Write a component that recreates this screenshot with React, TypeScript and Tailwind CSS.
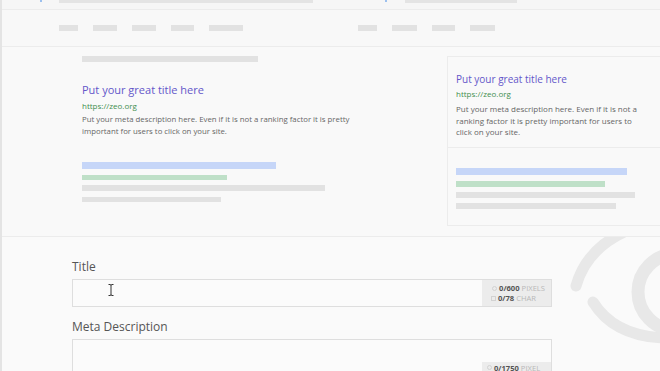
import React from "react";

const font = { fontFamily: '"Open Sans", "Noto Sans", sans-serif' };

function Snippet({ wide }: { wide: boolean }) {
  return (
    <div>
      <div
        className={
          wide
            ? "text-[11px] leading-[16px] text-[#6457c9]"
            : "text-[10px] leading-[14px] text-[#6457c9]"
        }
      >
        Put your great title here
      </div>
      <div className={wide ? "mt-[2px] text-[8px] leading-[12px] text-[#3f8f4f]" : "mt-[2px] text-[8px] leading-[12px] text-[#3f8f4f]"}>
        https://zeo.org
      </div>
      <div
        className={
          wide
            ? "mt-[1px] w-[292px] text-[7.8px] leading-[12px] text-[#666]"
            : "mt-[3px] w-[186px] text-[8px] leading-[11.5px] text-[#666]"
        }
      >
        Put your meta description here. Even if it is not a ranking factor it is pretty important for users to click on your site.
      </div>
    </div>
  );
}

function Counter({ a, b, c, d }: { a: string; b: string; c?: string; d?: string }) {
  return (
    <div className="w-[69px] bg-[#ececec] flex flex-col items-end justify-center pr-[6px] text-[7.6px] leading-[10px]">
      <div className="flex items-center gap-[2px]">
        <span className="inline-block w-[5px] h-[5px] rounded-full border border-[#d2d2d2]" />
        <span className="font-bold text-[#555]">{a}</span>
        <span className="text-[#b8b8b8]">{b}</span>
      </div>
      {c && (
        <div className="flex items-center gap-[2px] mr-[9px]">
          <span className="inline-block w-[5px] h-[5px] border border-[#d2d2d2]" />
          <span className="font-bold text-[#555]">{c}</span>
          <span className="text-[#b8b8b8]">{d}</span>
        </div>
      )}
    </div>
  );
}

export default function App() {
  return (
    <div
      className="relative w-[660px] h-[371px] overflow-hidden bg-[#fafafa] border-l-[2px] border-[#e4e4e4]"
      style={font}
    >
      {/* top strip */}
      <div className="relative h-[10px] border-b border-[#ececec] bg-[#f6f6f6]">
        <div className="absolute left-[38px] top-0 w-[2px] h-[2px] bg-[#9cc0ee]" />
        <div className="absolute left-[57px] top-0 w-[254px] h-[3px] bg-[#e4e4e4]" />
        <div className="absolute left-[383px] top-0 w-[2px] h-[2px] bg-[#9cc0ee]" />
        <div className="absolute left-[403px] top-0 w-[112px] h-[3px] bg-[#e4e4e4]" />
      </div>

      {/* nav */}
      <div className="h-[37px] border-b border-[#ececec] bg-[#f8f8f8] flex items-center pl-[57px] pr-[165px]">
        <div className="flex gap-[15px] items-center">
          <div className="w-[19px] h-[6px] bg-[#e2e2e2]" />
          <div className="w-[24px] h-[6px] bg-[#e2e2e2]" />
          <div className="w-[24px] h-[6px] bg-[#e2e2e2]" />
          <div className="w-[23px] h-[6px] bg-[#e2e2e2]" />
          <div className="w-[34px] h-[6px] bg-[#e2e2e2]" />
        </div>
        <div className="ml-auto flex gap-[15px] items-center">
          <div className="w-[19px] h-[6px] bg-[#e2e2e2]" />
          <div className="w-[25px] h-[6px] bg-[#e2e2e2]" />
          <div className="w-[23px] h-[6px] bg-[#e2e2e2]" />
          <div className="w-[25px] h-[6px] bg-[#e2e2e2]" />
        </div>
      </div>

      {/* previews */}
      <div className="relative z-10 h-[190px] border-b border-[#ececec] bg-[#f9f9f9] flex">
        <div className="w-[445px] pl-[80px] pt-[9px]">
          <div className="w-[176px] h-[6px] bg-[#e2e2e2]" />
          <div className="mt-[20px]">
            <Snippet wide />
          </div>
          <div className="mt-[25px] flex flex-col">
            <div className="w-[194px] h-[7px] bg-[#c6d6f8]" />
            <div className="mt-[6px] w-[145px] h-[5px] bg-[#bfe0c8]" />
            <div className="mt-[5px] w-[243px] h-[6px] bg-[#e2e2e2]" />
            <div className="mt-[6px] w-[139px] h-[5px] bg-[#e2e2e2]" />
          </div>
        </div>
        <div className="flex-1 pt-[9px]">
          <div className="h-[92px] border-l border-t border-b border-[#ececec] pl-[8px] pt-[15px]">
            <Snippet wide={false} />
          </div>
          <div className="h-[78px] border-l border-b border-[#ececec] pl-[8px] pt-[20px] flex flex-col">
            <div className="w-[171px] h-[7px] bg-[#c6d6f8]" />
            <div className="mt-[6px] w-[149px] h-[6px] bg-[#bfe0c8]" />
            <div className="mt-[5px] w-[179px] h-[6px] bg-[#e2e2e2]" />
            <div className="mt-[5px] w-[160px] h-[6px] bg-[#e2e2e2]" />
          </div>
        </div>
      </div>

      {/* watermark logo */}
      <svg
        className="absolute left-[540px] top-[220px]"
        width="120"
        height="151"
        viewBox="540 220 120 151"
      >
        <path
          d="M574 286 Q584 250 622 232"
          fill="none"
          stroke="#e8e8e8"
          strokeWidth="11"
          strokeLinecap="round"
        />
        <path
          d="M591 302 Q612 336 662 338"
          fill="none"
          stroke="#e8e8e8"
          strokeWidth="11"
          strokeLinecap="round"
        />
        <circle cx="674" cy="292" r="38" fill="none" stroke="#e8e8e8" strokeWidth="13" />
      </svg>

      {/* form */}
      <div className="relative z-10 pl-[70px] pt-[22px] w-[550px]">
        <div className="text-[12px] leading-[16px] text-[#555]">Title</div>
        <div className="mt-[4px] h-[28px] border border-[#dedede] bg-[#fbfbfb] flex">
          <div className="flex-1 relative">
            <svg className="absolute left-[35px] top-[4px]" width="6" height="12" viewBox="0 0 6 12">
              <path d="M0.5 0.5 H2 Q3 0.5 3 1.5 V10.5 Q3 11.5 2 11.5 H0.5 M5.5 0.5 H4 Q3 0.5 3 1.5 M3 10.5 Q3 11.5 4 11.5 H5.5" fill="none" stroke="#333" strokeWidth="1" />
            </svg>
          </div>
          <Counter a="0/600" b="PIXELS" c="0/78" d="CHAR" />
        </div>
        <div className="mt-[12px] text-[12px] leading-[16px] text-[#555]">Meta Description</div>
        <div className="mt-[4px] h-[60px] border border-[#dedede] bg-[#fbfbfb] flex">
          <div className="flex-1" />
          <div className="w-[69px] flex flex-col">
            <div className="h-[22px]" />
            <div className="flex-1 bg-[#ececec] pl-[5px] pt-[1px] text-[7.6px] leading-[10px] flex items-start gap-[2px]">
              <span className="mt-[2px] inline-block w-[5px] h-[5px] rounded-full border border-[#d2d2d2]" />
              <span className="font-bold text-[#555]">0/1750</span>
              <span className="text-[#b8b8b8]">PIXEL</span>
            </div>
          </div>
        </div>
      </div>
    </div>
  );
}
